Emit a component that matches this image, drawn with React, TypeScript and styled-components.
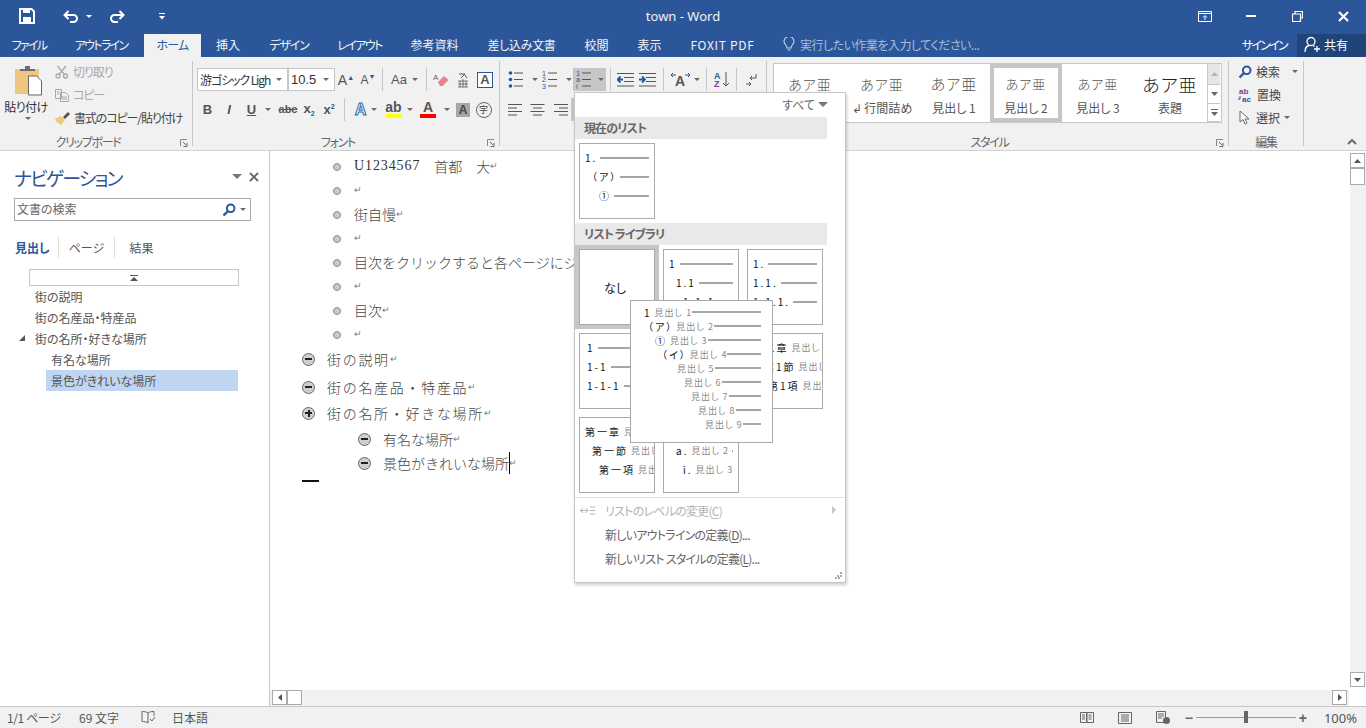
import React from 'react'
import styled, { createGlobalStyle } from 'styled-components'

const Global = createGlobalStyle`
  html, body { margin: 0; padding: 0; background: #fff; }
  body { font-family: "Noto Sans CJK JP", "Noto Sans", sans-serif; font-size: 12px; color: #444; }
  * { box-sizing: border-box; }
`

const Page = styled.div`
  position: relative;
  width: 1366px;
  height: 728px;
  display: flex;
  flex-direction: column;
  overflow: hidden;
  font-feature-settings: "palt";
`

/* title bar */
const TitleBar = styled.div`
  height: 34px;
  flex: none;
  background: #2b579a;
  display: grid;
  grid-template-columns: 1fr auto 1fr;
  align-items: center;
  color: #fff;
`
const Quick = styled.div`
  display: flex;
  align-items: center;
  height: 100%;
  padding: 0 0 2px 19px;
`
const QuickBtn = styled.div<{ $w: number }>`
  width: ${p => p.$w}px;
  display: flex;
  align-items: center;
  gap: 7px;
`
const TitleText = styled.div`
  font-family: "Noto Sans", sans-serif;
  font-size: 13px;
  color: #f0f0f0;
  padding-bottom: 2px;
`
const WinBtns = styled.div`
  display: flex;
  justify-content: flex-end;
  padding-bottom: 2px;
`
const WinBtn = styled.div`
  width: 46px;
  height: 16px;
  display: flex;
  align-items: center;
  justify-content: center;
`
const WhiteCaret = styled.i`
  width: 0;
  height: 0;
  border: 3px solid transparent;
  border-top: 3px solid #fff;
  border-bottom: 0;
`

/* tabs */
const TabBar = styled.div`
  height: 23px;
  flex: none;
  background: #2b579a;
  display: flex;
  align-items: stretch;
  color: #fff;
`
const Tab = styled.div<{ $w: number; $active?: boolean; $ls?: number }>`
  width: ${p => p.$w}px;
  display: flex;
  align-items: center;
  justify-content: center;
  white-space: nowrap;
  padding-bottom: 2px;
  letter-spacing: ${p => p.$ls ?? 0}px;
  background: ${p => (p.$active ? '#f1f1f1' : 'transparent')};
  color: ${p => (p.$active ? '#2b579a' : '#f4f4f4')};
`
const TellMe = styled.div`
  flex: 1;
  display: flex;
  align-items: center;
  gap: 5px;
  padding: 0 0 2px 14px;
  color: #a9bcd8;
  letter-spacing: -0.5px;
`
const SignIn = styled.div`
  display: flex;
  align-items: center;
  padding: 0 10px 2px 0;
  color: #fff;
  letter-spacing: -1.7px;
`
const Share = styled.div`
  width: 69px;
  background: #1e4478;
  display: flex;
  align-items: center;
  gap: 3px;
  padding: 0 0 2px 7px;
  color: #fff;
`

/* ribbon */
const Ribbon = styled.div`
  height: 94px;
  flex: none;
  background: #f1f1f1;
  border-bottom: 1px solid #d2d2d2;
  display: flex;
  align-items: flex-start;
  padding-top: 4px;
  position: relative;
`
const Group = styled.div<{ $w: number }>`
  width: ${p => p.$w}px;
  height: 85px;
  flex: none;
  border-right: 1px solid #c6c6c6;
  display: flex;
  flex-direction: column;
`
const GroupBody = styled.div`
  height: 71px;
  flex: none;
`
const GroupLabel = styled.div<{ $pad?: number }>`
  position: relative;
  flex: 1;
  display: flex;
  align-items: center;
  justify-content: center;
  color: #666;
  line-height: 1;
  letter-spacing: -1.3px;
  padding: 4px ${p => p.$pad ?? 0}px 0 0;
`
const Launcher = styled.svg`
  position: absolute;
  right: 3px;
  bottom: 0;
`
const ClipBody = styled(GroupBody)`
  display: flex;
`
const PasteCol = styled.div`
  width: 52px;
  display: flex;
  flex-direction: column;
  align-items: center;
  padding-top: 4px;
  color: #333;
  gap: 2px;
  white-space: nowrap;
  letter-spacing: -0.5px;
`
const PasteIcon = styled.svg`
  margin-left: 5px;
`
const PasteCaret = styled.i`
  width: 0;
  height: 0;
  margin-left: 3px;
  border: 3px solid transparent;
  border-top: 3px solid #6a6a6a;
  border-bottom: 0;
`
const ClipCol = styled.div`
  display: flex;
  flex-direction: column;
  padding-left: 3px;
  margin-top: -1px;
`
const ClipRow = styled.div<{ $off?: boolean }>`
  height: 23px;
  display: flex;
  align-items: center;
  gap: 4px;
  white-space: nowrap;
  letter-spacing: -1.1px;
  color: ${p => (p.$off ? '#a8a8a8' : '#444')};
`
const ToolRows = styled(GroupBody)`
  display: flex;
  flex-direction: column;
  gap: 7px;
  padding: 7px 0 0 4px;
`
const ToolRow = styled.div`
  display: flex;
  align-items: center;
  height: 23px;
`
const Sel = styled.div<{ $w: number }>`
  width: ${p => p.$w}px;
  height: 23px;
  background: #fff;
  border: 1px solid #c6c6c6;
  display: flex;
  align-items: center;
  justify-content: space-between;
  padding: 0 5px 0 2px;
  color: #333;
  white-space: nowrap;
  overflow: hidden;
  letter-spacing: -1.1px;
`
const Tool = styled.div<{ $w: number; $active?: boolean; $gap?: number }>`
  width: ${p => p.$w}px;
  height: 23px;
  flex: none;
  display: flex;
  align-items: center;
  justify-content: center;
  gap: ${p => p.$gap ?? 5}px;
  background: ${p => (p.$active ? '#c6c6c6' : 'transparent')};
  color: #555;
`
const ToolSep = styled.div<{ $mx?: number }>`
  width: 1px;
  height: 23px;
  flex: none;
  background: #c6c6c6;
  margin: 0 ${p => p.$mx ?? 4}px;
`
const Caret = styled.i<{ $ml?: number }>`
  width: 0;
  height: 0;
  flex: none;
  margin-left: ${p => p.$ml ?? 0}px;
  border: 3px solid transparent;
  border-top: 3px solid #6a6a6a;
  border-bottom: 0;
`
const Glyph = styled.span<{ $b?: boolean; $i?: boolean; $u?: boolean; $s?: number; $c?: string; $strike?: boolean }>`
  font-family: "Liberation Sans", sans-serif;
  font-size: ${p => p.$s ?? 13}px;
  font-weight: ${p => (p.$b ? 700 : 400)};
  font-style: ${p => (p.$i ? 'italic' : 'normal')};
  text-decoration: ${p => (p.$u ? 'underline' : p.$strike ? 'line-through' : 'none')};
  color: ${p => p.$c ?? '#555'};
  line-height: 1;
  letter-spacing: 0;
  position: relative;
`
const Sup = styled.span<{ $dir: 'up' | 'down' }>`
  font-size: 7px;
  color: #2b579a;
  font-weight: 700;
  vertical-align: ${p => (p.$dir === 'up' ? '5px' : '-3px')};
`
const ColorA = styled.div<{ $bar: string }>`
  width: 16px;
  height: 17px;
  display: flex;
  align-items: flex-start;
  justify-content: center;
  font: 700 14px/13px "Liberation Sans", sans-serif;
  color: #555;
  border-bottom: 4px solid ${p => p.$bar};
`
const BoxedA = styled.div`
  width: 16px;
  height: 16px;
  border: 1px solid #2b579a;
  background: #fff;
  display: flex;
  align-items: center;
  justify-content: center;
  font: 700 13px/1 "Liberation Sans", sans-serif;
  color: #555;
`
const ShadeA = styled.div`
  width: 14px;
  height: 14px;
  background: #a6a6a6;
  display: flex;
  align-items: center;
  justify-content: center;
  font: 700 12px/1 "Liberation Sans", sans-serif;
  color: #444;
`
const CircleChar = styled.div`
  width: 16px;
  height: 16px;
  border: 1px solid #666;
  border-radius: 50%;
  display: flex;
  align-items: center;
  justify-content: center;
  font-size: 9px;
  line-height: 1;
  color: #444;
`
const GlowA = styled.span`
  font: 700 16px/1 "Liberation Sans", sans-serif;
  color: #fff;
  -webkit-text-stroke: 1px #2b6cb0;
`

/* styles gallery */
const StylesBody = styled(GroupBody)`
  display: flex;
  padding: 2px 0 0 6px;
`
const Gallery = styled.div`
  width: 449px;
  height: 60px;
  background: #fff;
  border: 1px solid #c6c6c6;
  display: flex;
`
const StyleCard = styled.div<{ $on?: boolean }>`
  width: 72px;
  flex: none;
  display: flex;
  flex-direction: column;
  align-items: center;
  border: 4px solid ${p => (p.$on ? '#c6c6c6' : 'transparent')};
  color: #555;
`
const StyleSample = styled.div<{ $s: number; $c?: string }>`
  height: 31px;
  display: flex;
  align-items: center;
  font-size: ${p => p.$s}px;
  letter-spacing: 1px;
  font-weight: 300;
  color: ${p => p.$c ?? '#555'};
  white-space: nowrap;
  line-height: 1;
`
const StyleName = styled.div`
  white-space: nowrap;
  line-height: 17px;
  font-family: "Noto Sans CJK JP", sans-serif;
`
const GalleryScroll = styled.div`
  width: 13px;
  margin-left: 1px;
  display: flex;
  flex-direction: column;
  border-left: 1px solid #c6c6c6;
  flex: none;
`
const ScrollCell = styled.div<{ $h: number; $off?: boolean }>`
  height: ${p => p.$h}px;
  flex: none;
  background: ${p => (p.$off ? '#e6e6e6' : '#fff')};
  border-bottom: 1px solid #c6c6c6;
  display: flex;
  flex-direction: column;
  gap: 1px;
  align-items: center;
  justify-content: center;
`
const EditBody = styled(GroupBody)`
  display: flex;
  flex-direction: column;
  padding-left: 9px;
  margin-top: -1px;
  margin-bottom: 1px;
`
const EditRow = styled.div`
  height: 23px;
  display: flex;
  align-items: center;
  gap: 4px;
  color: #444;
  white-space: nowrap;
`
const Collapse = styled.svg`
  position: absolute;
  right: 9px;
  bottom: 5px;
`

/* main area */
const Main = styled.div`
  flex: 1;
  display: flex;
  min-height: 0;
`
const Nav = styled.div`
  width: 270px;
  flex: none;
  border-right: 1px solid #c6c6c6;
  padding: 15px 0 0 14px;
  display: flex;
  flex-direction: column;
`
const NavHead = styled.div`
  height: 32px;
  flex: none;
  display: flex;
  align-items: center;
  font-size: 19px;
  letter-spacing: -1.9px;
  color: #2b579a;
  padding: 0 0 10px;
  width: 245px;
  white-space: nowrap;
`
const NavTools = styled.div`
  margin-left: auto;
  margin-top: -1px;
  display: flex;
  align-items: center;
  gap: 7px;
`
const BigCaret = styled.i`
  width: 0;
  height: 0;
  border: 5px solid transparent;
  border-top: 5px solid #777;
  border-bottom: 0;
`
const SearchBox = styled.div`
  width: 237px;
  height: 23px;
  flex: none;
  border: 1px solid #a9a9a9;
  display: flex;
  align-items: center;
  padding: 0 4px 0 2px;
  color: #666;
  gap: 4px;
`
const SearchHint = styled.span`
  padding-bottom: 2px;
`
const SearchGap = styled.span`
  flex: 1;
`
const NavTabs = styled.div`
  display: flex;
  align-items: center;
  height: 21px;
  margin-top: 16px;
  flex: none;
`
const NavTab = styled.div<{ $on?: boolean; $w: number; $last?: boolean }>`
  width: ${p => p.$w}px;
  height: 21px;
  display: flex;
  align-items: center;
  justify-content: ${p => (p.$on ? 'flex-start' : 'center')};
  padding-left: ${p => (p.$on ? 1 : 0)}px;
  white-space: nowrap;
  border-right: 1px solid ${p => (p.$last ? 'transparent' : '#dcdcdc')};
  font-weight: ${p => (p.$on ? 700 : 400)};
  color: ${p => (p.$on ? '#2b579a' : '#555')};
`
const NavScrollUp = styled.div`
  width: 210px;
  height: 17px;
  margin: 11px 0 0 15px;
  flex: none;
  border: 1px solid #c6c6c6;
  display: flex;
  align-items: center;
  justify-content: center;
`
const Tree = styled.div`
  display: flex;
  flex-direction: column;
`
const TreeItem = styled.div<{ $depth: number; $on?: boolean }>`
  position: relative;
  height: 21px;
  display: flex;
  align-items: center;
  margin-left: ${p => (p.$depth ? 32 : 16)}px;
  padding-left: 5px;
  width: ${p => (p.$depth ? 192 : 208)}px;
  background: ${p => (p.$on ? '#c0d5f1' : 'transparent')};
  color: #555;
`
const Twist = styled.i`
  position: absolute;
  left: -11px;
  top: 7px;
  width: 0;
  height: 0;
  border-bottom: 6px solid #555;
  border-left: 6px solid transparent;
`

const Doc = styled.div`
  flex: 1;
  min-width: 0;
  display: flex;
  flex-direction: column;
`
const DocRow = styled.div`
  flex: 1;
  min-height: 0;
  display: flex;
`
const Sheet = styled.div`
  flex: 1;
  padding: 3px 0 0 32px;
  font-feature-settings: normal;
  color: #444;
  font-size: 14px;
`
const Line = styled.div<{ $h: number; $indent?: number }>`
  height: ${p => p.$h}px;
  display: flex;
  align-items: center;
  padding-left: ${p => p.$indent ?? 0}px;
  white-space: nowrap;
  font-weight: 300;
`
const Bullet = styled.i`
  width: 8px;
  height: 8px;
  margin: 2px 13px 0 31px;
  border-radius: 50%;
  background: #c9c9c9;
  border: 1px solid #8e8e8e;
  flex: none;
`
const Fold = styled.i<{ $plus?: boolean }>`
  position: relative;
  width: 13px;
  height: 13px;
  margin: 1px 12px 0 0;
  flex: none;
  border-radius: 50%;
  background: #d0d0d0;
  border: 1px solid #666;
  &::before {
    content: '';
    position: absolute;
    left: 2px;
    top: 4px;
    width: 7px;
    height: 2px;
    background: #222;
  }
  ${p =>
    p.$plus &&
    `&::after {
      content: '';
      position: absolute;
      left: 4.5px;
      top: 1.5px;
      width: 2px;
      height: 7px;
      background: #222;
    }`}
`
const HeadText = styled.span`
  letter-spacing: 1.7px;
`
const Latin = styled.span`
  font-family: "Liberation Serif", serif;
  letter-spacing: 0.9px;
  font-weight: 400;
  color: #333;
`
const Ret = styled.span`
  font-family: "DejaVu Sans", sans-serif;
  font-size: 9px;
  color: #777;
`
const Cursor = styled.i`
  width: 1px;
  height: 22px;
  background: #000;
  margin-right: -1px;
  flex: none;
`
const EndDash = styled.div`
  width: 17px;
  height: 2px;
  background: #111;
  margin-top: 8px;
`
const VScroll = styled.div`
  width: 16px;
  flex: none;
  display: flex;
  flex-direction: column;
  padding-top: 2px;
  margin-bottom: 3px;
  background: linear-gradient(#fff 2px, #f1f1f1 2px);
`
const SBtn = styled.div<{ $tall?: number }>`
  width: 15px;
  height: ${p => p.$tall ?? 15}px;
  flex: none;
  background: #fff;
  border: 1px solid #ababab;
  display: flex;
  align-items: center;
  justify-content: center;
`
const Grow = styled.div`
  flex: 1;
`
const HScroll = styled.div`
  height: 16px;
  flex: none;
  margin-right: 17px;
  background: #f1f1f1;
  display: flex;
  align-items: flex-start;
  padding: 0 2px;
`
const StatusBar = styled.div`
  height: 22px;
  flex: none;
  background: #f1f1f1;
  border-top: 1px solid #c6c6c6;
  display: flex;
  align-items: center;
  color: #555;
  padding-left: 7px;
  white-space: nowrap;
`
const StatusItem = styled.div<{ $w: number; $ls?: number }>`
  width: ${p => p.$w}px;
  flex: none;
  display: flex;
  align-items: center;
  letter-spacing: ${p => p.$ls ?? 0}px;
`
const ViewBtn = styled.div`
  width: 38px;
  flex: none;
  display: flex;
  justify-content: center;
`
const Slider = styled.div`
  position: relative;
  width: 100px;
  height: 1px;
  background: #999;
  &::after {
    content: '';
    position: absolute;
    left: 48px;
    top: -6px;
    width: 4px;
    height: 12px;
    background: #666;
  }
`
const ZoomMark = styled.span`
  font: 700 14px/1 "Liberation Sans", sans-serif;
  color: #666;
  width: 14px;
  text-align: center;
`
const Percent = styled.span`
  font-family: "Noto Sans", sans-serif;
  font-size: 13px;
  margin: 0 9px 0 14px;
`

/* list dropdown */
const Menu = styled.div`
  position: absolute;
  left: 574px;
  top: 92px;
  width: 272px;
  height: 491px;
  background: #fff;
  border: 1px solid #c6c6c6;
  box-shadow: 1px 2px 3px rgba(0, 0, 0, 0.2);
`
const MenuTop = styled.div`
  height: 24px;
  display: flex;
  align-items: center;
  justify-content: flex-end;
  gap: 3px;
  padding: 0 17px 2px 0;
  color: #666;
`
const Section = styled.div`
  height: 22px;
  margin-right: 18px;
  background: #e9e9e9;
  display: flex;
  align-items: center;
  padding: 0 0 2px 9px;
  font-weight: 700;
  color: #666;
  letter-spacing: -0.9px;
`
const TileWrap = styled.div`
  padding: 4px;
`
const TileGrid = styled.div`
  display: grid;
  grid-template-columns: repeat(3, 76px);
  grid-auto-rows: 76px;
  gap: 8px;
  padding: 4px 4px 0;
`
const Tile = styled.div<{ $on?: boolean }>`
  width: 76px;
  height: 76px;
  border: 1px solid #ababab;
  padding-top: 4px;
  overflow: hidden;
  background: #fff;
  outline: ${p => (p.$on ? '4px solid #c6c6c6' : 'none')};
`
const NoneTile = styled(Tile)`
  display: flex;
  align-items: center;
  justify-content: center;
  padding: 0 4px 0 0;
  color: #222;
`
const ThumbRow = styled.div<{ $indent: number }>`
  height: 19px;
  display: flex;
  align-items: center;
  gap: 3px;
  padding: 0 5px 0 ${p => p.$indent}px;
  white-space: nowrap;
`
const ThumbNum = styled.span`
  font-size: 10px;
  letter-spacing: 2px;
  color: #111;
  flex: none;
`
const ThumbHead = styled.span`
  font-size: 9px;
  letter-spacing: 1px;
  color: #888;
  flex: none;
`
const ThumbLine = styled.i`
  flex: 1;
  min-width: 0;
  height: 2px;
  background: #a6a6a6;
`
const MenuSep = styled.div`
  height: 1px;
  background: #e1e1e1;
  margin-top: 4px;
`
const MenuItem = styled.div<{ $off?: boolean }>`
  height: 24px;
  display: flex;
  align-items: center;
  padding-left: 5px;
  letter-spacing: -0.75px;
  color: ${p => (p.$off ? '#b4b4b4' : '#666')};
  u {
    text-underline-offset: 2px;
  }
`
const MenuIconSlot = styled.div`
  width: 25px;
  flex: none;
  display: flex;
`
const SubArrow = styled.i`
  width: 0;
  height: 0;
  margin-left: auto;
  margin-right: 9px;
  border: 4px solid transparent;
  border-left: 4px solid #c6c6c6;
  border-right: 0;
`
const Grip = styled.svg`
  position: absolute;
  right: 3px;
  bottom: 3px;
`
const Preview = styled.div`
  position: absolute;
  left: 630px;
  top: 300px;
  width: 143px;
  height: 143px;
  background: #fff;
  border: 1px solid #ababab;
  padding: 4px 11px 0 0;
`
const PreviewRow = styled.div<{ $indent: number }>`
  height: 14px;
  display: flex;
  align-items: center;
  gap: 3px;
  padding-left: ${p => p.$indent}px;
  white-space: nowrap;
`
const PreviewLine = styled(ThumbLine)`
  margin-left: -3px;
`

const launcher = (
  <Launcher width="9" height="9" viewBox="0 0 9 9">
    <path d="M.5 7V.5H7" fill="none" stroke="#888" />
    <path d="M3 3l3 3M7 4v3.500H3.500" fill="none" stroke="#666" />
  </Launcher>
)

const ListLines = ({ marks }: { marks: string[] }) => (
  <svg width="15" height="19" viewBox="0 0 15 19">
    {[3, 9.5, 16].map((y, i) => (
      <g key={y}>
        {marks[i] === 'dot' ? (
          <circle cx="2.500" cy={y} r="1.800" fill="#2b579a" />
        ) : (
          <text x="0" y={y + 2.5} fontSize="7" fill="#2b579a" fontFamily="Liberation Sans">
            {marks[i]}
          </text>
        )}
        <rect x="6" y={y - 0.5} width="9" height="1" fill="#555" />
      </g>
    ))}
  </svg>
)

const AlignIcon = ({ kind }: { kind: 'l' | 'c' | 'r' }) => {
  const rows = [14, 9, 14, 9]
  return (
    <svg width="15" height="12" viewBox="0 0 15 12">
      {rows.map((w, i) => (
        <rect
          key={i}
          x={kind === 'l' ? 0 : kind === 'c' ? (15 - w) / 2 : 15 - w}
          y={i * 3.5}
          width={w}
          height="1"
          fill="#555"
        />
      ))}
    </svg>
  )
}

const IndentIcon = ({ out }: { out?: boolean }) => (
  <svg width="18" height="14" viewBox="0 0 18 14">
    <path d="M0 .5h17M7 4.500h10M7 8.500h10M0 13h17" stroke="#555" fill="none" />
    <path d={out ? 'M6 6.500H1M3.500 3.500l-3 3 3 3' : 'M0 6.500h5M3 3.500l3 3-3 3'} stroke="#2b579a" strokeWidth="1.800" fill="none" />
  </svg>
)

const SearchIcon = ({ size = 14 }: { size?: number }) => (
  <svg width={size} height={size} viewBox="0 0 14 14">
    <circle cx="8.700" cy="5.300" r="3.800" fill="none" stroke="#2b579a" strokeWidth="2" />
    <path d="M6 8L1.500 12.500" stroke="#2b579a" strokeWidth="2.400" />
  </svg>
)

type Thumb = { indent: number; num?: string; head?: string }

const ThumbRows = ({ rows }: { rows: Thumb[] }) => (
  <>
    {rows.map((r, i) => (
      <ThumbRow key={i} $indent={r.indent}>
        {r.num && <ThumbNum>{r.num}</ThumbNum>}
        {r.head && <ThumbHead>{r.head}</ThumbHead>}
        <ThumbLine />
      </ThumbRow>
    ))}
  </>
)

const library: Thumb[][] = [
  [{ indent: 5, num: '1' }, { indent: 12, num: '1.1' }, { indent: 19, num: '1.1.1' }],
  [{ indent: 5, num: '1.' }, { indent: 5, num: '1.1.' }, { indent: 5, num: '1.1.1.' }],
  [{ indent: 7, num: '1' }, { indent: 7, num: '1-1' }, { indent: 7, num: '1-1-1' }],
  [{ indent: 5, num: '1' }, { indent: 12, num: '1.1' }, { indent: 19, num: '1.1.1' }],
  [
    { indent: 9, num: '第1章', head: '見出し 1' },
    { indent: 16, num: '第1節', head: '見出し 2' },
    { indent: 20, num: '第1項', head: '見出し 3' },
  ],
  [
    { indent: 5, num: '第一章', head: '見出し 1' },
    { indent: 12, num: '第一節', head: '見出し 2' },
    { indent: 19, num: '第一項', head: '見出し 3' },
  ],
  [
    { indent: 5, num: '1.', head: '見出し 1' },
    { indent: 12, num: 'a.', head: '見出し 2' },
    { indent: 19, num: 'i.', head: '見出し 3' },
  ],
]

const previewRows = [
  { indent: 13, num: '1', head: '見出し 1' },
  { indent: 17, num: '（ア）', head: '見出し 2' },
  { indent: 24, num: '①', head: '見出し 3' },
  { indent: 31, num: '（イ）', head: '見出し 4' },
  { indent: 46, head: '見出し 5' },
  { indent: 53, head: '見出し 6' },
  { indent: 60, head: '見出し 7' },
  { indent: 67, head: '見出し 8' },
  { indent: 74, head: '見出し 9' },
]

const outline = ['U', '', '街自慢', '', '目次をクリックすると各ページにジャンプします', '', '目次', '']

export default function App() {
  return (
    <Page>
      <Global />
      <TitleBar>
        <Quick>
          <QuickBtn $w={44}>
            <svg width="16" height="16" viewBox="0 0 16 16">
              <path d="M1 1h11.500L15 3.500V15H1z" fill="none" stroke="#fff" strokeWidth="2" />
              <path d="M4 1h7v4H4zM4 9h8v6H4z" fill="#fff" />
            </svg>
          </QuickBtn>
          <QuickBtn $w={46}>
            <svg width="16" height="13" viewBox="0 0 16 13">
              <path d="M5.500 1L1.500 5l4 4M2 5h8.500a3.500 3.500 0 0 1 0 7H7" fill="none" stroke="#fff" strokeWidth="2" />
            </svg>
            <WhiteCaret />
          </QuickBtn>
          <QuickBtn $w={50}>
            <svg width="16" height="13" viewBox="0 0 16 13">
              <path d="M10.500 1l4 4-4 4M14 5H5.500a3.500 3.500 0 0 0 0 7H9" fill="none" stroke="#fff" strokeWidth="2" />
            </svg>
          </QuickBtn>
          <QuickBtn $w={16}>
            <svg width="7" height="7" viewBox="0 0 7 7">
              <path d="M0 0h6v1H0zM0 3h6L3 6.500z" fill="#fff" />
            </svg>
          </QuickBtn>
        </Quick>
        <TitleText>town - Word</TitleText>
        <WinBtns>
          <WinBtn>
            <svg width="14" height="11" viewBox="0 0 14 11">
              <path d="M.5.500h13v10H.5zM.5 2.500h13" fill="none" stroke="#fff" />
              <path d="M7 9V5M5 6.500l2-2 2 2" fill="none" stroke="#fff" />
            </svg>
          </WinBtn>
          <WinBtn>
            <svg width="10" height="2" viewBox="0 0 10 2">
              <rect width="10" height="2" fill="#fff" />
            </svg>
          </WinBtn>
          <WinBtn>
            <svg width="11" height="11" viewBox="0 0 11 11">
              <path d="M3 2.500V.5h7.500V7H8.500M.5 3h8v7.500h-8z" fill="none" stroke="#fff" strokeWidth="1.200" />
            </svg>
          </WinBtn>
          <WinBtn>
            <svg width="11" height="11" viewBox="0 0 11 11">
              <path d="M1 1l9 9M10 1l-9 9" stroke="#fff" strokeWidth="2.200" />
            </svg>
          </WinBtn>
        </WinBtns>
      </TitleBar>

      <TabBar>
        <Tab $w={58} $ls={-1.7}>ファイル</Tab>
        <Tab $w={86} $ls={-1.7}>アウトライン</Tab>
        <Tab $w={57} $active $ls={-0.8}>ホーム</Tab>
        <Tab $w={54}>挿入</Tab>
        <Tab $w={68} $ls={-1.2}>デザイン</Tab>
        <Tab $w={73} $ls={-1.6}>レイアウト</Tab>
        <Tab $w={77}>参考資料</Tab>
        <Tab $w={97} $ls={-0.3}>差し込み文書</Tab>
        <Tab $w={53}>校閲</Tab>
        <Tab $w={53}>表示</Tab>
        <Tab $w={93} $ls={0.7}>FOXIT PDF</Tab>
        <TellMe>
          <svg width="12" height="15" viewBox="0 0 12 15">
            <path d="M4 11c0-3-3-3.500-3-6.500a5 5 0 0 1 10 0C11 7.500 8 8 8 11zM4.500 13h3" fill="none" stroke="#c9d6e8" strokeWidth="1.100" />
          </svg>
          実行したい作業を入力してください...
        </TellMe>
        <SignIn>サインイン</SignIn>
        <Share>
          <svg width="17" height="17" viewBox="0 0 17 17">
            <circle cx="7" cy="5.500" r="4" fill="none" stroke="#fff" strokeWidth="1.300" />
            <path d="M1 16c0-4 2-6 4-6.500M9 9.500l1.500 1M13 10v6M10 13h6" fill="none" stroke="#fff" strokeWidth="1.300" />
          </svg>
          共有
        </Share>
      </TabBar>

      <Ribbon>
        <Group $w={193}>
          <ClipBody>
            <PasteCol>
              <PasteIcon width="30" height="31" viewBox="0 0 30 31">
                <rect x="1" y="4" width="24" height="25" fill="#efc67f" />
                <path d="M6 6V4h5V1h5v3h5v2z" fill="#6e6e6e" />
                <path d="M14.500 11h8l5 5v14h-13z" fill="#fff" stroke="#666" />
              </PasteIcon>
              <span>貼り付け</span>
              <PasteCaret />
            </PasteCol>
            <ClipCol>
              <ClipRow $off>
                <svg width="14" height="14" viewBox="0 0 14 14">
                  <circle cx="3" cy="11" r="2" fill="none" stroke="#a8a8a8" strokeWidth="1.300" />
                  <circle cx="10.500" cy="11" r="2" fill="none" stroke="#a8a8a8" strokeWidth="1.300" />
                  <path d="M4 9.500L11 1M9.500 9.500L2.500 1" stroke="#a8a8a8" strokeWidth="1.300" />
                </svg>
                切り取り
              </ClipRow>
              <ClipRow $off>
                <svg width="14" height="14" viewBox="0 0 14 14">
                  <path d="M.5 1.500h6v9h-6zM5.500 4.500h5l3 3v6h-8z" fill="#f1f1f1" stroke="#a8a8a8" />
                  <path d="M2 4h3M2 6h2M7 9h5M7 11h5" stroke="#a8a8a8" />
                </svg>
                コピー
              </ClipRow>
              <ClipRow>
                <svg width="15" height="14" viewBox="0 0 15 14">
                  <path d="M0 8l6-3 4 4-4 5C4 13 1 11 0 8z" fill="#efc67f" />
                  <path d="M8 6l5-5 2 2-5 5z" fill="#555" />
                </svg>
                書式のコピー/貼り付け
              </ClipRow>
            </ClipCol>
          </ClipBody>
          <GroupLabel $pad={16}>
            クリップボード
            {launcher}
          </GroupLabel>
        </Group>

        <Group $w={307}>
          <ToolRows>
            <ToolRow>
              <Sel $w={91}>
                <span>游ゴシック Ligh</span>
                <Caret />
              </Sel>
              <Sel $w={47}>
                <Glyph $s={13} $c="#333">10.5</Glyph>
                <Caret />
              </Sel>
              <Tool $w={22}><Glyph $s={14}>A<Sup $dir="up">▲</Sup></Glyph></Tool>
              <Tool $w={22}><Glyph $s={12}>A<Sup $dir="up">▼</Sup></Glyph></Tool>
              <ToolSep $mx={3} />
              <Tool $w={37}><Glyph $s={13}>Aa</Glyph><Caret /></Tool>
              <ToolSep $mx={3} />
              <Tool $w={22}>
                <svg width="16" height="16" viewBox="0 0 16 16">
                  <text x="0" y="8" fontSize="8" fill="#666" fontFamily="Liberation Sans">A</text>
                  <path d="M5 10l6-6 4.500 4-6 6H7z" fill="#e8808f" />
                </svg>
              </Tool>
              <Tool $w={22}>
                <svg width="12" height="16" viewBox="0 0 12 16">
                  <path d="M2 2h6L4 6M8 3l2 3" stroke="#555" fill="none" />
                  <path d="M1 9h10M1 12h10M1 15h10M3 9v6M9 9v6M6 7v8" stroke="#555" fill="none" strokeWidth=".8" />
                </svg>
              </Tool>
              <Tool $w={22}><BoxedA>A</BoxedA></Tool>
            </ToolRow>
            <ToolRow>
              <Tool $w={21}><Glyph $b $s={13}>B</Glyph></Tool>
              <Tool $w={22}><Glyph $b $i $s={13}>I</Glyph></Tool>
              <Tool $w={38} $gap={9}><Glyph $b $u $s={13}>U</Glyph><Caret /></Tool>
              <Tool $w={20}><Glyph $s={11} $strike $b>abc</Glyph></Tool>
              <Tool $w={22}><Glyph $b $s={13}>x<Sup $dir="down">2</Sup></Glyph></Tool>
              <Tool $w={18}><Glyph $b $s={13}>x<Sup $dir="up">2</Sup></Glyph></Tool>
              <ToolSep $mx={6} />
              <Tool $w={30}><GlowA>A</GlowA><Caret /></Tool>
              <Tool $w={36}><ColorA $bar="#ffff00">ab</ColorA><Caret /></Tool>
              <Tool $w={36} $gap={8}><ColorA $bar="#ff0000">A</ColorA><Caret /></Tool>
              <Tool $w={20}><ShadeA>A</ShadeA></Tool>
              <Tool $w={21}><CircleChar>字</CircleChar></Tool>
            </ToolRow>
          </ToolRows>
          <GroupLabel $pad={16}>
            フォント
            {launcher}
          </GroupLabel>
        </Group>

        <Group $w={267}>
          <ToolRows>
            <ToolRow>
              <Tool $w={37} $gap={9}><ListLines marks={['dot', 'dot', 'dot']} /><Caret /></Tool>
              <Tool $w={32} $gap={9}><ListLines marks={['1', '2', '3']} /><Caret /></Tool>
              <Tool $w={33} $active $gap={7}><ListLines marks={['1', 'a', 'i']} /><Caret /></Tool>
              <ToolSep />
              <Tool $w={22}><IndentIcon out /></Tool>
              <Tool $w={22}><IndentIcon /></Tool>
              <ToolSep />
              <Tool $w={34} $gap={3}>
                <svg width="21" height="15" viewBox="0 0 21 15">
                  <text x="5" y="14" fontSize="14" fontWeight="700" fill="#555" fontFamily="Liberation Sans">A</text>
                  <path d="M6 3H1M3 1L1 3l2 2M15 3h5M18 1l2 2-2 2" stroke="#2b579a" fill="none" />
                </svg>
                <Caret />
              </Tool>
              <ToolSep />
              <Tool $w={22}>
                <svg width="16" height="17" viewBox="0 0 16 17">
                  <text x="0" y="8" fontSize="9" fontWeight="700" fill="#2b579a" fontFamily="Liberation Sans">A</text>
                  <text x="0" y="16" fontSize="9" fontWeight="700" fill="#7b3f98" fontFamily="Liberation Sans">Z</text>
                  <path d="M12 1v14M9 12l3 3 3-3" stroke="#555" fill="none" />
                </svg>
              </Tool>
              <ToolSep $mx={3} />
              <Tool $w={22}>
                <svg width="12" height="14" viewBox="0 0 12 14">
                  <path d="M11 1v4H5M7 3L5 5l2 2M1 11h5M4 9l2 2-2 2" stroke="#555" fill="none" />
                </svg>
              </Tool>
            </ToolRow>
            <ToolRow>
              <Tool $w={22}><AlignIcon kind="l" /></Tool>
              <Tool $w={23}><AlignIcon kind="c" /></Tool>
              <Tool $w={22}><AlignIcon kind="r" /></Tool>
              <Tool $w={30} $active />
            </ToolRow>
          </ToolRows>
          <GroupLabel />
        </Group>

        <Group $w={462}>
          <StylesBody>
            <Gallery>
              <StyleCard>
                <StyleSample $s={14}>あア亜</StyleSample>
                <StyleName>標準</StyleName>
              </StyleCard>
              <StyleCard>
                <StyleSample $s={14}>あア亜</StyleSample>
                <StyleName>↲ 行間詰め</StyleName>
              </StyleCard>
              <StyleCard>
                <StyleSample $s={15}>あア亜</StyleSample>
                <StyleName>見出し 1</StyleName>
              </StyleCard>
              <StyleCard $on>
                <StyleSample $s={13}>あア亜</StyleSample>
                <StyleName>見出し 2</StyleName>
              </StyleCard>
              <StyleCard>
                <StyleSample $s={13}>あア亜</StyleSample>
                <StyleName>見出し 3</StyleName>
              </StyleCard>
              <StyleCard>
                <StyleSample $s={18} $c="#222">あア亜</StyleSample>
                <StyleName>表題</StyleName>
              </StyleCard>
              <GalleryScroll>
                <ScrollCell $h={21} $off>
                  <svg width="7" height="4" viewBox="0 0 7 4"><path d="M3.500 0L7 4H0z" fill="#b4b4b4" /></svg>
                </ScrollCell>
                <ScrollCell $h={19}>
                  <svg width="7" height="4" viewBox="0 0 7 4"><path d="M0 0h7L3.500 4z" fill="#666" /></svg>
                </ScrollCell>
                <ScrollCell $h={18}>
                  <svg width="7" height="7" viewBox="0 0 7 7"><path d="M0 0h7v1H0zM0 3h7L3.500 7z" fill="#666" /></svg>
                </ScrollCell>
              </GalleryScroll>
            </Gallery>
          </StylesBody>
          <GroupLabel $pad={16}>
            スタイル
            {launcher}
          </GroupLabel>
        </Group>

        <Group $w={75}>
          <EditBody>
            <EditRow>
              <SearchIcon />
              検索
              <Caret $ml={8} />
            </EditRow>
            <EditRow>
              <svg width="15" height="15" viewBox="0 0 15 15">
                <text x="1" y="7" fontSize="8" fontWeight="700" fill="#7b3f98" fontFamily="Liberation Sans">ab</text>
                <text x="4" y="14.500" fontSize="8" fontWeight="700" fill="#2b579a" fontFamily="Liberation Sans">ac</text>
                <path d="M2 9v3H0" stroke="#2b579a" fill="none" />
              </svg>
              置換
            </EditRow>
            <EditRow>
              <svg width="14" height="15" viewBox="0 0 14 15">
                <path d="M2 1v11l3-2.500 2 4.500 2-1-2-4h4z" fill="#fff" stroke="#666" />
              </svg>
              選択
              <Caret />
            </EditRow>
          </EditBody>
          <GroupLabel>編集</GroupLabel>
        </Group>

        <Collapse width="10" height="6" viewBox="0 0 10 6">
          <path d="M1 5l4-4 4 4" fill="none" stroke="#666" strokeWidth="1.800" />
        </Collapse>
      </Ribbon>

      <Main>
        <Nav>
          <NavHead>
            ナビゲーション
            <NavTools>
              <BigCaret />
              <svg width="10" height="10" viewBox="0 0 10 10">
                <path d="M1 1l8 8M9 1l-8 8" stroke="#666" strokeWidth="1.800" />
              </svg>
            </NavTools>
          </NavHead>
          <SearchBox>
            <SearchHint>文書の検索</SearchHint>
            <SearchGap />
            <SearchIcon />
            <Caret />
          </SearchBox>
          <NavTabs>
            <NavTab $on $w={45}>見出し</NavTab>
            <NavTab $w={56}>ページ</NavTab>
            <NavTab $w={54} $last>結果</NavTab>
          </NavTabs>
          <NavScrollUp>
            <svg width="8" height="6" viewBox="0 0 8 6">
              <path d="M0 0h8v1H0zM4 2l4 4H0z" fill="#555" />
            </svg>
          </NavScrollUp>
          <Tree>
            <TreeItem $depth={0}>街の説明</TreeItem>
            <TreeItem $depth={0}>街の名産品・特産品</TreeItem>
            <TreeItem $depth={0}><Twist />街の名所・好きな場所</TreeItem>
            <TreeItem $depth={1}>有名な場所</TreeItem>
            <TreeItem $depth={1} $on>景色がきれいな場所</TreeItem>
          </Tree>
        </Nav>

        <Doc>
          <DocRow>
            <Sheet>
              {outline.map((t, i) => (
                <Line key={i} $h={24}>
                  <Bullet />
                  {t === 'U' ? (
                    <>
                      <Latin>U1234567</Latin>　首都　大
                    </>
                  ) : (
                    t
                  )}
                  <Ret>↵</Ret>
                </Line>
              ))}
              <Line $h={26}><Fold /><HeadText>街の説明</HeadText><Ret>↵</Ret></Line>
              <Line $h={30}><Fold /><HeadText>街の名産品・特産品</HeadText><Ret>↵</Ret></Line>
              <Line $h={22}><Fold $plus /><HeadText>街の名所・好きな場所</HeadText><Ret>↵</Ret></Line>
              <Line $h={30} $indent={56}><Fold />有名な場所<Ret>↵</Ret></Line>
              <Line $h={18} $indent={56}><Fold />景色がきれいな場所<Cursor /><Ret>↵</Ret></Line>
              <EndDash />
            </Sheet>
            <VScroll>
              <SBtn>
                <svg width="7" height="4" viewBox="0 0 7 4"><path d="M3.500 0L7 4H0z" fill="#555" /></svg>
              </SBtn>
              <SBtn $tall={17} />
              <Grow />
              <SBtn>
                <svg width="7" height="4" viewBox="0 0 7 4"><path d="M0 0h7L3.500 4z" fill="#555" /></svg>
              </SBtn>
            </VScroll>
          </DocRow>
          <HScroll>
            <SBtn>
              <svg width="4" height="7" viewBox="0 0 4 7"><path d="M4 0v7L0 3.500z" fill="#555" /></svg>
            </SBtn>
            <SBtn />
            <Grow />
            <SBtn>
              <svg width="4" height="7" viewBox="0 0 4 7"><path d="M0 0v7l4-3.500z" fill="#555" /></svg>
            </SBtn>
          </HScroll>
        </Doc>
      </Main>

      <StatusBar>
        <StatusItem $w={72} $ls={-0.4}>1/1 ページ</StatusItem>
        <StatusItem $w={62}>69 文字</StatusItem>
        <StatusItem $w={31}>
          <svg width="15" height="13" viewBox="0 0 15 13">
            <path d="M7 2C5.500.8 3 .5 1 .5v10c2 0 4.500.3 6 1.500V2c1.500-1.200 3-1.500 6-1.500V5M9 8l2 2 3-4" fill="none" stroke="#666" />
          </svg>
        </StatusItem>
        <span>日本語</span>
        <Grow />
        <ViewBtn>
          <svg width="14" height="12" viewBox="0 0 14 12">
            <path d="M.5.500h6v10h-6zM7 .5h6.500v10H7zM2 3h3M2 5h3M2 7h3M8.500 3h3M8.500 5h3M8.500 7h3" fill="none" stroke="#666" />
          </svg>
        </ViewBtn>
        <ViewBtn>
          <svg width="14" height="12" viewBox="0 0 14 12">
            <path d="M.5.500h13v11H.5zM3 3h8M3 5h8M3 7h8M3 9h8" fill="none" stroke="#666" />
          </svg>
        </ViewBtn>
        <ViewBtn>
          <svg width="14" height="13" viewBox="0 0 14 13">
            <path d="M.5.500h9v11H.5zM2 3h6M2 5h6M2 7h4" fill="none" stroke="#666" />
            <circle cx="10.500" cy="9.500" r="3.500" fill="#666" />
          </svg>
        </ViewBtn>
        <ZoomMark>−</ZoomMark>
        <Slider />
        <ZoomMark>+</ZoomMark>
        <Percent>100%</Percent>
      </StatusBar>

      <Menu>
        <MenuTop>
          すべて
          <BigCaret />
        </MenuTop>
        <Section>現在のリスト</Section>
        <TileWrap>
          <Tile>
            <ThumbRows rows={[{ indent: 5, num: '1.' }, { indent: 12, num: '（ア）' }, { indent: 19, num: '①' }]} />
          </Tile>
        </TileWrap>
        <Section>リスト ライブラリ</Section>
        <TileGrid>
          <NoneTile $on>なし</NoneTile>
          {library.map((rows, i) => (
            <Tile key={i}>
              <ThumbRows rows={rows} />
            </Tile>
          ))}
        </TileGrid>
        <MenuSep />
        <MenuItem $off>
          <MenuIconSlot>
            <svg width="15" height="11" viewBox="0 0 15 11">
              <path d="M0 5.500h8M3 3L.5 5.500 3 8M8 5.500L5.500 3M8 5.500L5.500 8M10 2h5M10 5.500h5M10 9h5" stroke="#b4b4b4" fill="none" />
            </svg>
          </MenuIconSlot>
          リストのレベルの変更(<u>C</u>)
          <SubArrow />
        </MenuItem>
        <MenuItem>
          <MenuIconSlot />
          新しいアウトラインの定義(<u>D</u>)...
        </MenuItem>
        <MenuItem>
          <MenuIconSlot />
          新しいリスト スタイルの定義(<u>L</u>)...
        </MenuItem>
        <Grip width="7" height="7" viewBox="0 0 7 7">
          <path d="M5 0h2v2H5zM2 3h2v2H2zM5 3h2v2H5zM0 5h2v2H0zM3 5h2v2H3z" fill="#aaa" />
        </Grip>
      </Menu>

      <Preview>
        {previewRows.map((r, i) => (
          <PreviewRow key={i} $indent={r.indent}>
            {r.num && <ThumbNum>{r.num}</ThumbNum>}
            <ThumbHead>{r.head}</ThumbHead>
            <PreviewLine />
          </PreviewRow>
        ))}
      </Preview>
    </Page>
  )
}
